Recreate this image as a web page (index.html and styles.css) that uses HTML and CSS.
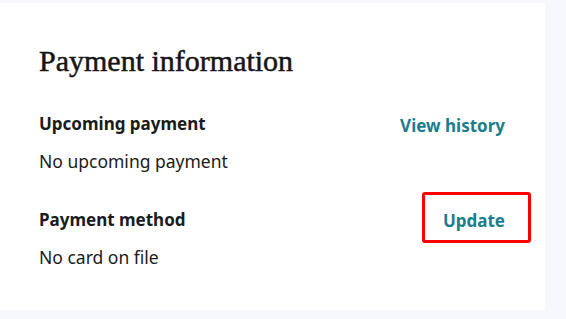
FILE: index.html
```html
<!DOCTYPE html>
<html lang="en">
<head>
<meta charset="utf-8">
<title>Payment information</title>
<link rel="stylesheet" href="styles.css">
</head>
<body>
<main class="page">
  <section class="card">
    <h2 class="card-title">Payment information</h2>
    <div class="row row-upcoming">
      <div class="info">
        <div class="label">Upcoming payment</div>
        <div class="value">No upcoming payment</div>
      </div>
      <a class="link" href="#">View history</a>
    </div>
    <div class="row row-method">
      <div class="info">
        <div class="label">Payment method</div>
        <div class="value">No card on file</div>
      </div>
      <a class="link link-highlight" href="#">Update</a>
    </div>
  </section>
</main>
</body>
</html>
```

FILE: styles.css
```css
html, body {
  margin: 0;
  padding: 0;
}
body {
  background: #f7f8fd;
  font-family: "Noto Sans", "Liberation Sans", sans-serif;
  color: #1b1b1b;
  width: 566px;
  height: 319px;
  overflow: hidden;
}
.page {
  padding-top: 3px;
}
.card {
  background: #ffffff;
  width: 545px;
  height: 307px;
  box-sizing: border-box;
  padding: 40px 40px 0 39px;
}
.card-title {
  margin: 0;
  font-family: "Liberation Serif", serif;
  font-weight: normal;
  font-size: 30px;
  line-height: 36px;
  color: #161616;
  -webkit-text-stroke: 0.5px #161616;
}
.row {
  display: flex;
  justify-content: space-between;
  align-items: flex-start;
}
.row-upcoming {
  margin-top: 33px;
}
.row-method {
  margin-top: 35px;
}
.label {
  font-weight: bold;
  font-size: 17px;
  line-height: 24px;
}
.value {
  margin-top: 13px;
  font-size: 17.5px;
  line-height: 24px;
}
.link {
  color: #1b7d8b;
  font-weight: bold;
  font-size: 17px;
  line-height: 24px;
  text-decoration: none;
  margin-top: 2px;
}
.link-highlight {
  position: relative;
  margin-top: 1px;
}
.link-highlight::after {
  content: "";
  position: absolute;
  left: -21px;
  right: -26px;
  top: -17px;
  bottom: -10px;
  border: 3px solid #ff0000;
  border-radius: 3px;
}
```
